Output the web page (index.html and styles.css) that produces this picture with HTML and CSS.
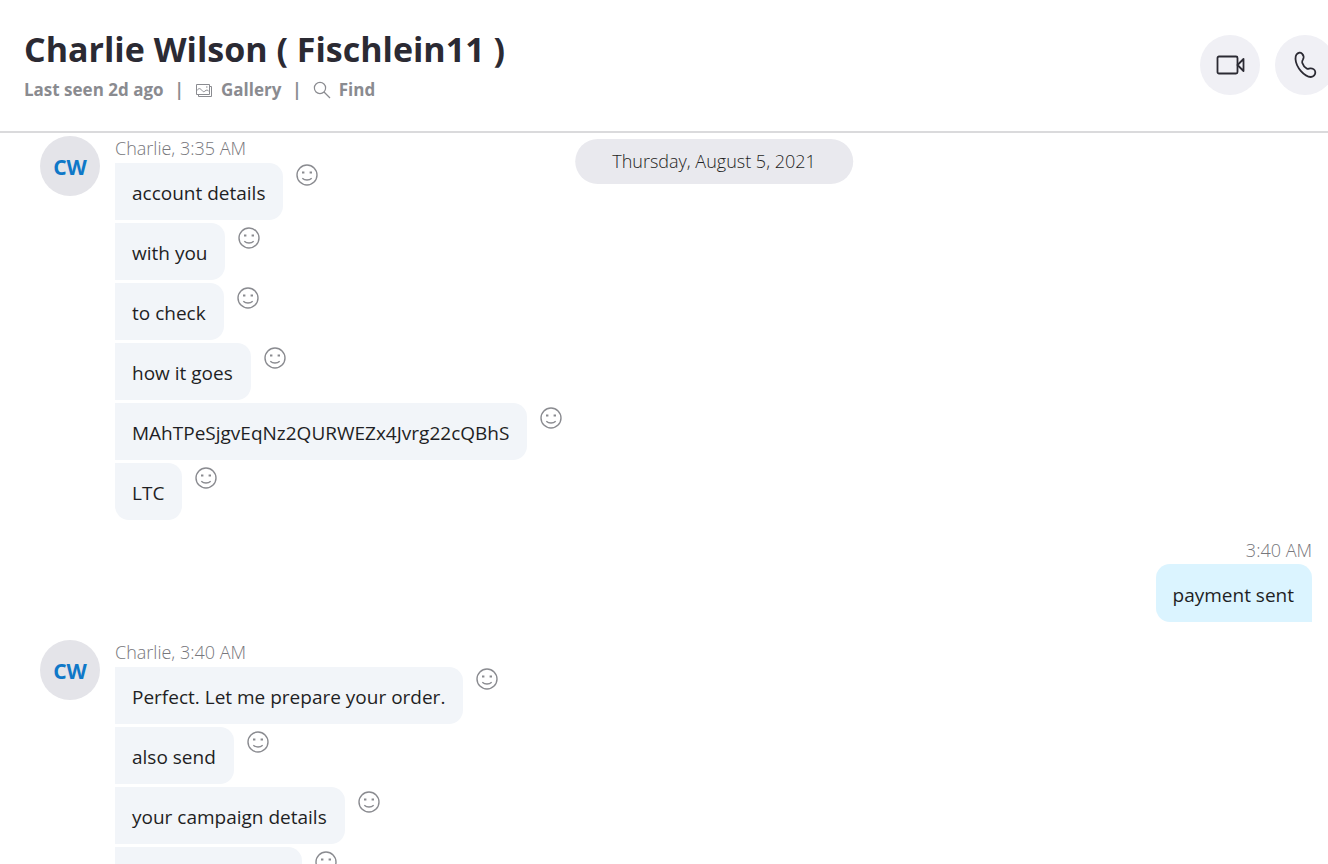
FILE: index.html
```html
<!DOCTYPE html>
<html lang="en">
<head>
<meta charset="utf-8">
<meta name="viewport" content="width=device-width, initial-scale=1">
<title>Charlie Wilson ( Fischlein11 )</title>
<link rel="stylesheet" href="styles.css">
</head>
<body>
<svg class="sprite" aria-hidden="true">
  <symbol id="smile" viewBox="0 0 22 22">
    <circle cx="11" cy="11" r="10" fill="none" stroke="currentColor" stroke-width="1.4"/>
    <path d="M6 8.5h2.400M13.600 8.500H16" stroke="currentColor" stroke-width="2"/>
    <path d="M6.300 14.200c1.400 1.300 3 1.800 4.700 1.800s3.300-.5 4.700-1.800" fill="none" stroke="currentColor" stroke-width="1.4"/>
  </symbol>
</svg>
<header class="header">
  <div class="identity">
    <h1 class="name">Charlie Wilson ( Fischlein11 )</h1>
    <div class="meta">
      <span>Last seen 2d ago</span>
      <span class="bar">|</span>
      <button class="tool" type="button">
        <svg class="tool-icon" viewBox="0 0 18 18" fill="none" stroke="currentColor" stroke-width="1"><path d="M1.500 3.500h13v10h-13zM14.500 5.500h2v10h-13v-2"/><path d="M2 9.500c2-3 3.500-2 5 0 1 1.300 2 1.600 3 .5 1.500-1.500 3-1 4 .5M11 6h1.500"/></svg>
        <span>Gallery</span>
      </button>
      <span class="bar">|</span>
      <button class="tool" type="button">
        <svg class="tool-icon" viewBox="0 0 18 18" fill="none" stroke="currentColor" stroke-width="1.200"><circle cx="7" cy="7" r="5.600"/><path d="M11 11l6 6"/></svg>
        <span>Find</span>
      </button>
    </div>
  </div>
  <div class="calls">
    <button class="call" type="button" aria-label="Video call">
      <svg class="call-icon" viewBox="0 0 30 30" fill="none" stroke="currentColor" stroke-width="1.800" stroke-linejoin="round"><rect x="2.500" y="6.500" width="20" height="17" rx="1.500"/><path d="M22.500 15l6-6v12z"/></svg>
    </button>
    <button class="call" type="button" aria-label="Audio call">
      <svg class="call-icon" viewBox="0 0 30 30" fill="none" stroke="currentColor" stroke-width="1.800" stroke-linejoin="round"><path d="M6.500 4.500C8 2.400 10.500 2.200 12 3.600C13.600 5.200 14 7.400 13 9.400C12.200 10.800 11.800 11.400 12.200 12.700C13 15.200 14.800 17.400 17 18.700C18.200 19.200 19 18.500 20.200 18.400C22.600 18.200 25 19.800 25.300 22C25.600 24.600 23.600 26.800 20.800 27C14.500 26.800 6 17.500 5.500 9C5.400 7.200 5.700 5.600 6.500 4.500Z"/></svg>
    </button>
  </div>
</header>
<main class="chat">
  <time class="date">Thursday, August 5, 2021</time>
  <section class="group">
    <div class="avatar">CW</div>
    <div class="thread">
      <div class="stamp">Charlie, 3:35 AM</div>
      <div class="row"><p class="bubble">account details</p><button class="react" type="button" aria-label="React"><svg><use href="#smile"/></svg></button></div>
      <div class="row"><p class="bubble">with you</p><button class="react" type="button" aria-label="React"><svg><use href="#smile"/></svg></button></div>
      <div class="row"><p class="bubble">to check</p><button class="react" type="button" aria-label="React"><svg><use href="#smile"/></svg></button></div>
      <div class="row"><p class="bubble">how it goes</p><button class="react" type="button" aria-label="React"><svg><use href="#smile"/></svg></button></div>
      <div class="row"><p class="bubble">MAhTPeSjgvEqNz2QURWEZx4Jvrg22cQBhS</p><button class="react" type="button" aria-label="React"><svg><use href="#smile"/></svg></button></div>
      <div class="row"><p class="bubble last">LTC</p><button class="react" type="button" aria-label="React"><svg><use href="#smile"/></svg></button></div>
    </div>
  </section>
  <section class="sent">
    <div class="stamp">3:40 AM</div>
    <p class="bubble own">payment sent</p>
  </section>
  <section class="group">
    <div class="avatar">CW</div>
    <div class="thread">
      <div class="stamp">Charlie, 3:40 AM</div>
      <div class="row"><p class="bubble">Perfect. Let me prepare your order.</p><button class="react" type="button" aria-label="React"><svg><use href="#smile"/></svg></button></div>
      <div class="row"><p class="bubble">also send</p><button class="react" type="button" aria-label="React"><svg><use href="#smile"/></svg></button></div>
      <div class="row"><p class="bubble">your campaign details</p><button class="react" type="button" aria-label="React"><svg><use href="#smile"/></svg></button></div>
      <div class="row"><p class="bubble blank"></p><button class="react" type="button" aria-label="React"><svg><use href="#smile"/></svg></button></div>
    </div>
  </section>
</main>
</body>
</html>
```
FILE: styles.css
```css
* { box-sizing: border-box; }
body {
  margin: 0;
  height: 100vh;
  overflow: hidden;
  display: flex;
  flex-direction: column;
  background: #fff;
  color: #1f1f24;
  font-family: "Open Sans", "Noto Sans", sans-serif;
}
h1, p { margin: 0; }
button {
  border: 0;
  padding: 0;
  background: none;
  color: inherit;
  font: inherit;
}
.sprite { display: none; }

.header {
  flex: none;
  display: flex;
  justify-content: space-between;
  align-items: flex-start;
  padding: 28px 0 29px 24px;
  border-bottom: 2px solid #dadadc;
}
.name {
  font-size: 34px;
  line-height: 42px;
  font-weight: 700;
  color: #2b2a33;
}
.meta {
  display: flex;
  align-items: center;
  gap: 11px;
  margin-top: 8px;
  font-size: 17px;
  line-height: 24px;
  font-weight: 700;
  color: #8a8b90;
}
.tool {
  display: flex;
  align-items: center;
  gap: 8px;
}
.tool-icon { width: 18px; height: 18px; }
.calls {
  display: flex;
  gap: 15px;
  margin: 7px -7px 0 0;
}
.call {
  display: grid;
  place-items: center;
  width: 60px;
  height: 60px;
  border-radius: 50%;
  background: #f0f0f5;
  color: #2b2a33;
}
.call-icon { width: 30px; height: 30px; }

.chat {
  position: relative;
  flex: 1;
  min-height: 0;
  overflow: hidden;
  padding: 3px 16px 0 40px;
}
.date {
  position: absolute;
  top: 6px;
  left: calc(50% + 50px);
  transform: translateX(-50%);
  padding: 0 37px;
  border-radius: 23px;
  background: #e9e9ee;
  font-size: 18px;
  line-height: 45px;
  font-weight: 300;
  white-space: nowrap;
}
.group { display: flex; gap: 15px; }
.avatar {
  flex: none;
  width: 60px;
  height: 60px;
  border-radius: 50%;
  background: #e4e4e9;
  color: #0f78c8;
  font-size: 21px;
  line-height: 62px;
  font-weight: 700;
  text-align: center;
}
.thread {
  display: flex;
  flex-direction: column;
  gap: 3px;
}
.stamp {
  height: 24px;
  font-size: 18px;
  line-height: 24px;
  font-weight: 300;
  color: #77777c;
}
.row {
  display: flex;
  align-items: flex-start;
  gap: 13px;
}
.bubble {
  height: 57px;
  padding: 4px 18px 0 17px;
  border-radius: 0 14px 14px 0;
  background: #f2f5f9;
  font-size: 19px;
  line-height: 53px;
}
.last { border-bottom-left-radius: 14px; }
.blank { width: 187px; }
.react {
  width: 22px;
  height: 22px;
  margin-top: 4px;
  color: #8a8b90;
}
.react svg { display: block; width: 22px; height: 22px; }
.stamp + .row .react { margin-top: 1px; }
.sent {
  display: flex;
  flex-direction: column;
  align-items: flex-end;
  gap: 2px;
  padding: 18px 0;
}
.own {
  height: 58px;
  padding-top: 5px;
  border-radius: 14px 14px 0 14px;
  background: #dbf4ff;
}
```
